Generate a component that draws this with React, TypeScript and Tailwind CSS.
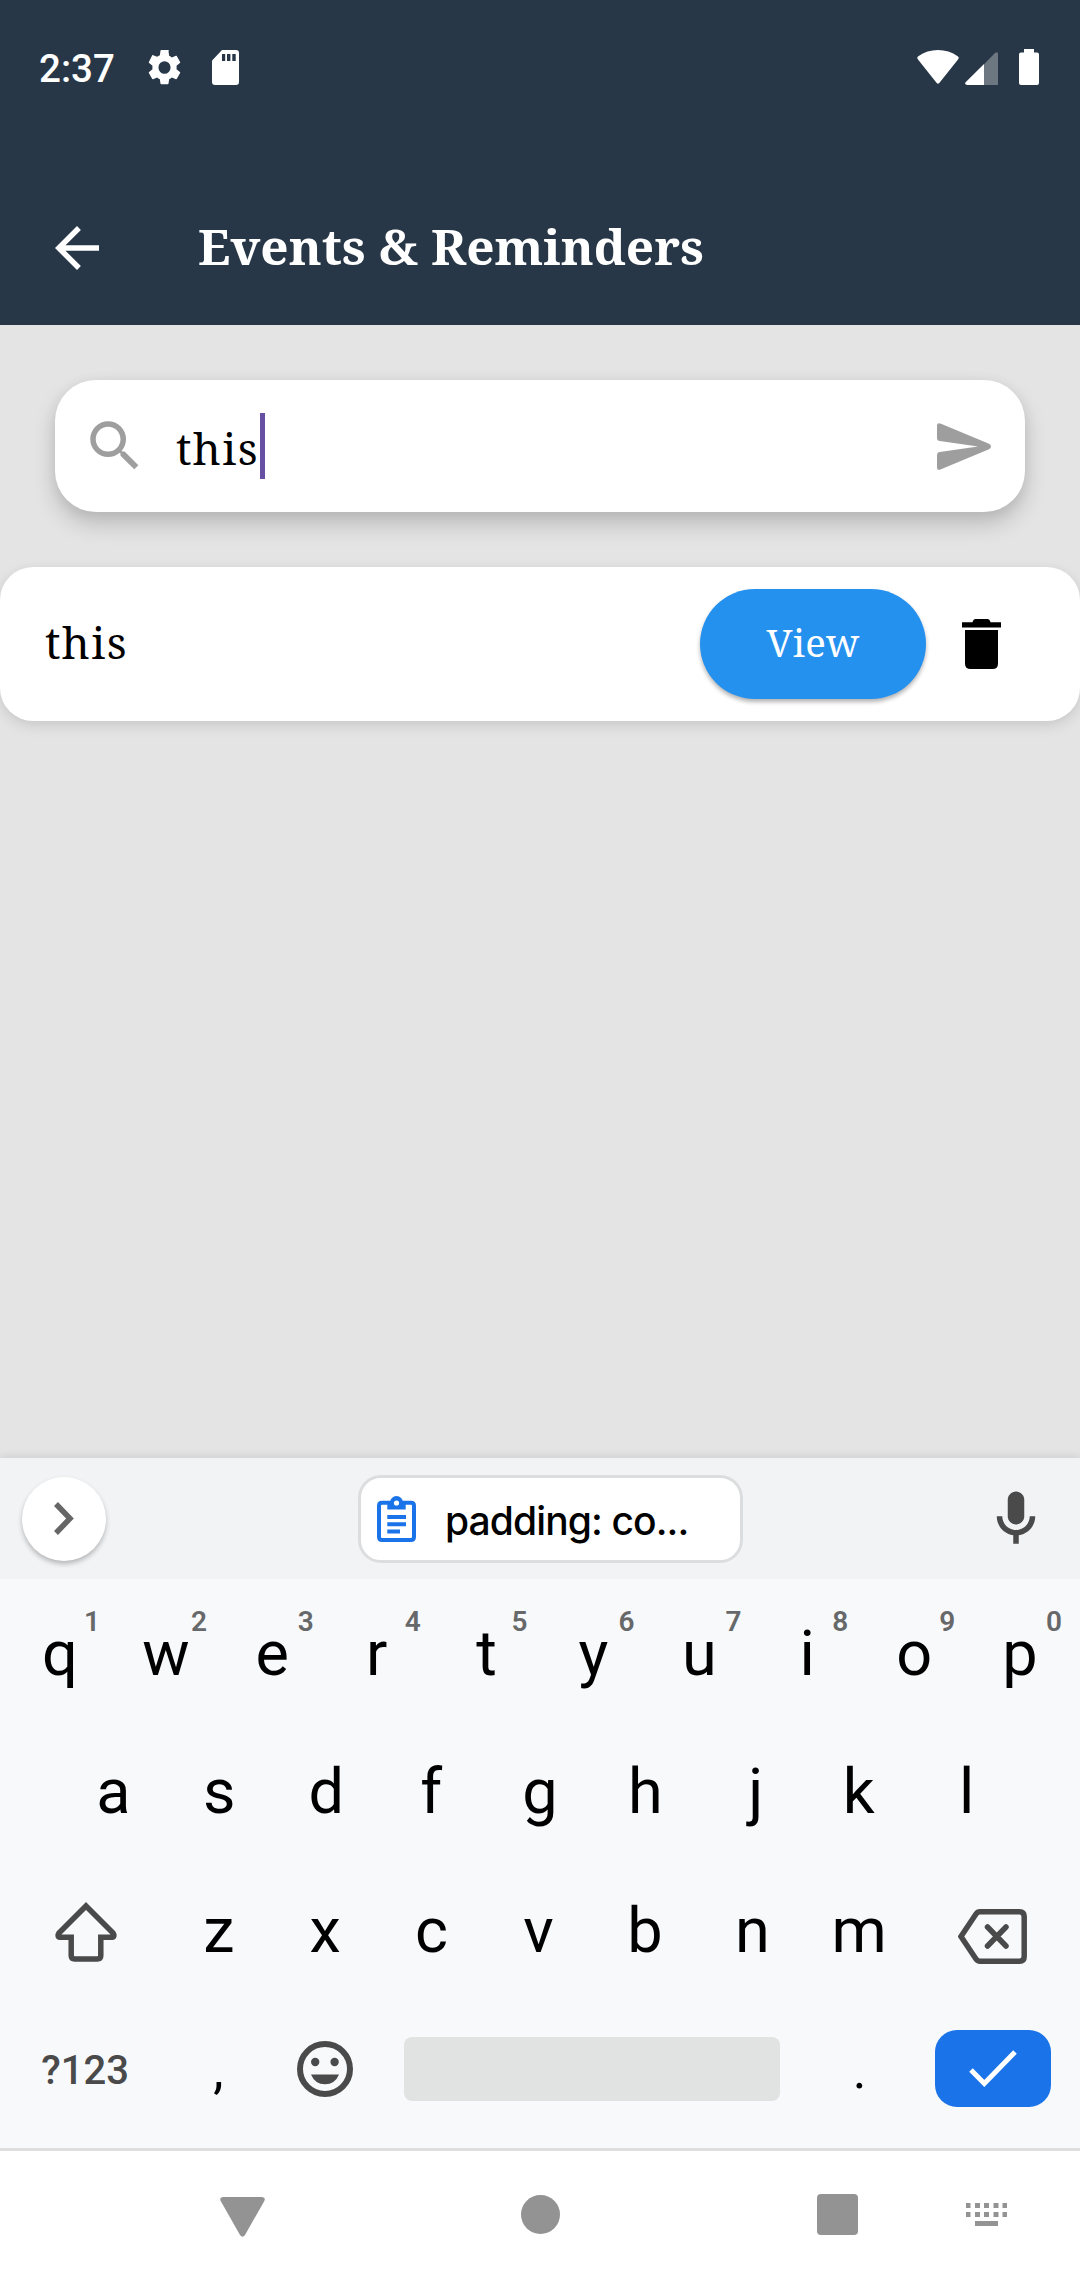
import type { ReactNode } from "react";

const serif = "font-['Noto_Serif','Droid_Serif','DejaVu_Serif_Condensed','DejaVu_Serif',serif]";

function StatusBar() {
  return (
    <div className="flex h-[134px] items-center justify-between pr-[41px] pl-[39px]">
      <div className="flex items-center">
        <span className="w-[109px] pt-[5px] text-[38.5px] leading-none font-medium">2:37</span>
        <svg className="h-[35px] w-[33px]" viewBox="2.2 2 19.6 20" preserveAspectRatio="none" fill="currentColor">
          <path d="M19.14 12.94c.04-.3.06-.61.06-.94s-.02-.64-.07-.94l2.03-1.58c.18-.14.23-.41.12-.61l-1.92-3.32c-.12-.22-.37-.29-.59-.22l-2.39.96c-.5-.38-1.03-.7-1.62-.94l-.36-2.54A.48.48 0 0 0 13.92 2h-3.84c-.24 0-.43.17-.47.41l-.36 2.54c-.59.24-1.13.57-1.62.94l-2.39-.96c-.22-.08-.47 0-.59.22L2.74 8.87c-.12.21-.08.47.12.61l2.03 1.58c-.05.3-.09.63-.09.94s.02.64.07.94l-2.03 1.58c-.18.14-.23.41-.12.61l1.92 3.32c.12.22.37.29.59.22l2.39-.96c.5.38 1.03.7 1.62.94l.36 2.54c.05.24.24.41.48.41h3.84c.24 0 .44-.17.47-.41l.36-2.54c.59-.24 1.13-.56 1.62-.94l2.39.96c.22.08.47 0 .59-.22l1.92-3.32c.12-.22.07-.47-.12-.61l-2.01-1.58zM12 15.6A3.6 3.6 0 1 1 12 8.4a3.6 3.6 0 0 1 0 7.2z" />
        </svg>
        <svg className="ml-[31px] h-[35px] w-[27px]" viewBox="0 0 27 35" fill="currentColor">
          <path fillRule="evenodd" d="M10 0H24Q27 0 27 3V32Q27 35 24 35H3Q0 35 0 32V11.500Q0 10.500 .8 9.700ZM10 4V11H13.200V4ZM15 4V11H18.400V4ZM20.300 4V11H23.700V4Z" />
        </svg>
      </div>
      <div className="flex items-center">
        <svg className="h-[34px] w-[42px]" viewBox="0 0 42 34" fill="currentColor">
          <path d="M1 9.500Q-.6 7.600 1.300 6.200Q10 0 21 0T40.700 6.200Q42.600 7.600 41 9.500L22.300 33Q21 34.500 19.700 33Z" />
        </svg>
        <svg className="mt-[2px] ml-[6px] h-[33px] w-[33px]" viewBox="0 0 33 33" fill="currentColor">
          <path d="M19 12.300 30 1Q33 -1 33 2V33H19Z" opacity=".32" />
          <path d="M19 12V33H2Q-1 32.500 .6 30.300Z" />
        </svg>
        <svg className="ml-[21px] h-[36px] w-[20px]" viewBox="0 0 20 36" fill="currentColor">
          <path d="M5 0H15V3.500H18Q20 3.500 20 5.500V34Q20 36 18 36H2Q0 36 0 34V5.500Q0 3.500 2 3.500H5Z" />
        </svg>
      </div>
    </div>
  );
}

function Header() {
  return (
    <header className="flex h-[325px] flex-col bg-[#283747] text-white">
      <StatusBar />
      <div className="flex h-[191px] items-center pt-[37px] pl-[44px]">
        <svg className="size-[66px]" viewBox="0 0 24 24" fill="currentColor">
          <path d="M20 11H7.830l5.590-5.590L12 4l-8 8 8 8 1.410-1.410L7.830 13H20v-2z" />
        </svg>
        <h1 className={`${serif} ml-[88px] pb-[3px] text-[49.5px] leading-none font-bold whitespace-nowrap`}>
          Events &amp; Reminders
        </h1>
      </div>
    </header>
  );
}

function SearchBar() {
  return (
    <div className="mx-[55px] flex h-[132px] items-center rounded-[41px] bg-white px-[27px] shadow-[0_12px_22px_rgba(0,0,0,0.18),0_2px_14px_rgba(0,0,0,0.06)]">
      <svg className="size-[66px] text-[#9e9e9e]" viewBox="0 0 24 24" fill="currentColor">
        <path d="M15.500 14h-.79l-.28-.27A6.471 6.471 0 0 0 16 9.500 6.500 6.500 0 1 0 9.500 16c1.610 0 3.090-.59 4.230-1.570l.27.28v.79l5 4.990L20.490 19l-4.990-5zm-6 0C7.010 14 5 11.990 5 9.500S7.010 5 9.500 5 14 7.010 14 9.500 11.990 14 9.500 14z" />
      </svg>
      <span className={`${serif} ml-[28px] pt-[3px] text-[44px] leading-none tracking-[1.375px]`}>this</span>
      <span className="ml-[1px] h-[66px] w-[5.500px] bg-[#6750a4]" />
      <svg className="mr-[7px] ml-auto h-[47px] w-[54px] text-[#9e9e9e]" viewBox="0 0 54 47" fill="currentColor">
        <path d="M0 3Q0-1 4 .7L52 20.800Q54 22 54 23.500T52 26.200L4 46.300Q0 48 0 44V32Q0 29.300 2.800 28.900L41 23.500 2.800 18.100Q0 17.700 0 15Z" />
      </svg>
    </div>
  );
}

function ResultCard() {
  return (
    <div className="mt-[55px] flex h-[154px] items-center rounded-[33px] bg-white pr-[79px] pl-[45px] shadow-[0_5px_14px_rgba(0,0,0,0.1),0_1px_10px_rgba(0,0,0,0.03)]">
      <span className={`${serif} pb-[5px] text-[44px] leading-none tracking-[1.375px]`}>this</span>
      <button className={`${serif} ml-auto h-[110px] w-[226px] rounded-full bg-[#2591ef] pb-[3px] text-[38.5px] leading-none tracking-[0.275px] text-white shadow-[0_3px_4px_rgba(0,0,0,0.3)]`}>
        View
      </button>
      <svg className="ml-[36px] h-[50px] w-[39px]" viewBox="0 0 39 50">
        <path d="M0 3.300H10.500Q11.500 0 13.500 0H25.500Q27.500 0 28.500 3.300H39V8.500H0Z" />
        <path d="M3 11H36V44.500Q36 50 30.500 50H8.500Q3 50 3 44.500Z" />
      </svg>
    </div>
  );
}

function SuggestionStrip() {
  return (
    <div className="flex h-[121px] items-center bg-[#f1f3f5] pr-[44px] pl-[22px]">
      <div className="flex size-[84px] items-center justify-center rounded-full bg-white shadow-[0_3px_5px_rgba(0,0,0,0.25)]">
        <svg className="h-[33px] w-[20px] text-[#666]" viewBox="0 0 20 33" fill="none" stroke="currentColor" strokeWidth="5.500">
          <path d="M2 2 16 16.500 2 31" />
        </svg>
      </div>
      <div className="ml-[252px] flex h-[88px] w-[385px] items-center rounded-[23px] border-[3px] border-[#dcdddf] bg-white pl-[16px]">
        <svg className="h-[46px] w-[39px] text-[#1a73e8]" viewBox="0 0 39 46">
          <path d="M5 6.700H34Q37 6.700 37 9.700V41Q37 44 34 44H5Q2 44 2 41V9.700Q2 6.700 5 6.700Z" fill="none" stroke="currentColor" strokeWidth="4" />
          <path d="M10.300 5H28.700V13.500H10.300Z" fill="currentColor" />
          <circle cx="19.500" cy="6.500" r="6.500" fill="currentColor" />
          <circle cx="19.500" cy="7" r="2.600" fill="#fff" />
          <path d="M10.300 21H29M10.300 28.300H29M10.300 35.500H23" fill="none" stroke="currentColor" strokeWidth="4" />
        </svg>
        <span className="ml-[29px] pt-[4px] font-['Inter',sans-serif] text-[39px] leading-none font-medium tracking-[-0.9px] whitespace-nowrap">
          padding: co...
        </span>
      </div>
      <svg className="-mr-[13px] ml-auto size-[66px] text-[#4a4a4a]" viewBox="0 0 24 24" fill="currentColor">
        <path d="M12 14c1.660 0 3-1.340 3-3V5c0-1.660-1.340-3-3-3S9 3.340 9 5v6c0 1.660 1.340 3 3 3z" />
        <path d="M17 11c0 2.760-2.240 5-5 5s-5-2.240-5-5H5c0 3.530 2.610 6.430 6 6.920V21h2v-3.080c3.390-.49 6-3.390 6-6.920h-2z" />
      </svg>
    </div>
  );
}

const nudge: Record<string, string> = {
  q: "pl-[2px]",
  e: "pr-[1px]",
  r: "pr-[6px]",
  u: "pr-[2px]",
  p: "pr-[2px]",
  a: "pl-[2px]",
  f: "pr-[4px]",
  h: "pr-[3px]",
  j: "pl-[4px]",
  k: "pr-[4px]",
  l: "pr-[2px]",
  z: "pr-[1px]",
  x: "pr-[2px]",
  c: "pr-[3px]",
  v: "pr-[3px]",
  b: "pr-[4px]",
  n: "pr-[3px]",
  m: "pr-[3px]",
};

function Key({ label, hint }: { label: string; hint?: string }) {
  return (
    <div className={`relative flex w-[106.900px] items-center justify-center text-[63px] leading-none ${nudge[label] ?? ""}`}>
      {label}
      {hint && (
        <span className="absolute top-[24px] left-[72.500px] w-[28px] text-center text-[28px] leading-none font-semibold text-[#666869]">
          {hint}
        </span>
      )}
    </div>
  );
}

function PunctuationKey({ label }: { label: string }) {
  return (
    <div className="flex w-[106.900px] items-center justify-center pt-[4px] text-[52px] leading-none">{label}</div>
  );
}

function WideKey({ children }: { children: ReactNode }) {
  return <div className="flex w-[160.350px] items-center justify-center text-[#4a4a4a]">{children}</div>;
}

function Keyboard() {
  return (
    <div className="bg-[#f8f9fb] text-black shadow-[0_-2px_8px_rgba(0,0,0,0.09)]">
      <SuggestionStrip />
      <div className="grid h-[569px] grid-rows-[repeat(4,138.500px)] pt-[5px]">
        <div className="flex justify-center">
          {[..."qwertyuiop"].map((c, i) => (
            <Key key={c} label={c} hint={"1234567890"[i]} />
          ))}
        </div>
        <div className="flex justify-center">
          {[..."asdfghjkl"].map((c) => (
            <Key key={c} label={c} />
          ))}
        </div>
        <div className="flex justify-center">
          <WideKey>
            <svg className="mt-[4px] h-[60px] w-[62px]" viewBox="0 0 62 60" fill="none" stroke="currentColor" strokeWidth="5.500">
              <path d="M31 4 58 31Q60.500 35.300 56 35.300H45.800V53.500Q45.800 57 42.300 57H19.700Q16.200 57 16.200 53.500V35.300H6Q1.500 35.300 4 31Z" />
            </svg>
          </WideKey>
          {[..."zxcvbnm"].map((c) => (
            <Key key={c} label={c} />
          ))}
          <WideKey>
            <svg className="mt-[12px] ml-[-4px] h-[55px] w-[69px]" viewBox="0 0 69 55" fill="none" stroke="currentColor" strokeWidth="5.500">
              <path d="M22 2.750H61.500Q66.200 2.750 66.200 7.500V47.500Q66.200 52.250 61.500 52.250H22Q19.500 52.250 18 50L3 27.500 18 5Q19.500 2.750 22 2.750Z" />
              <path d="M29.500 18 48 37M48 18 29.500 37" strokeLinecap="round" />
            </svg>
          </WideKey>
        </div>
        <div className="flex justify-center pr-[2px]">
          <WideKey>
            <span className="pt-[4px] pl-[1px] text-[40px] leading-none font-medium">?123</span>
          </WideKey>
          <PunctuationKey label="," />
          <div className="flex w-[106.900px] items-center justify-center text-[#4a4a4a]">
            <svg className="size-[56px]" viewBox="0 0 56 56" fill="currentColor">
              <circle cx="28" cy="28" r="25" fill="none" stroke="currentColor" strokeWidth="6" />
              <circle cx="18.200" cy="21" r="4.200" />
              <circle cx="37.600" cy="21" r="4.200" />
              <path d="M14 33.500H42Q38 43.300 28 43.300T14 33.500Z" />
            </svg>
          </div>
          <div className="flex w-[427.600px] items-center justify-center">
            <div className="h-[64px] w-[376px] rounded-lg bg-[#e1e3e2]" />
          </div>
          <PunctuationKey label="." />
          <WideKey>
            <div className="flex h-[77px] w-[116px] items-center justify-center rounded-[22px] bg-[#1a73e8]">
              <svg className="h-[37px] w-[48px]" viewBox="0 0 48 37" fill="none" stroke="#fff" strokeWidth="5">
                <path d="M2 20 15.300 33.500 46 2" />
              </svg>
            </div>
          </WideKey>
        </div>
      </div>
    </div>
  );
}

function NavBar() {
  return (
    <div className="flex h-[132px] items-center border-t-[3px] border-[#dedede] bg-white pb-[2px] text-[#939393]">
      <svg className="mt-[4px] ml-[220px] h-[40px] w-[45px]" viewBox="0 0 45 40" fill="currentColor">
        <path d="M3 0H42Q46 .3 44.300 4L25 38Q22.500 41.500 20 38L.7 4Q-1 .3 3 0Z" />
      </svg>
      <div className="ml-[256px] size-[39px] rounded-full bg-[#939393]" />
      <div className="ml-[257px] size-[41px] rounded-[4px] bg-[#939393]" />
      <svg className="ml-[108px] h-[23px] w-[41px]" viewBox="0 0 41 23" fill="currentColor">
        <path d="M0 0H4.500V5H0ZM9 0H14V5H9ZM18 0H23V5H18ZM27.500 0H32.500V5H27.500ZM36.500 0H41V5H36.500ZM0 9H4.500V14H0ZM9 9H14V14H9ZM18 9H23V14H18ZM27.500 9H32.500V14H27.500ZM36.500 9H41V14H36.500ZM9 18H32V23H9Z" />
      </svg>
    </div>
  );
}

export default function App() {
  return (
    <div className="flex h-[2280px] w-[1080px] flex-col overflow-hidden bg-[#e4e4e4] font-['Roboto',sans-serif] text-black">
      <Header />
      <main className="flex-1 pt-[55px]">
        <SearchBar />
        <ResultCard />
      </main>
      <Keyboard />
      <NavBar />
    </div>
  );
}
